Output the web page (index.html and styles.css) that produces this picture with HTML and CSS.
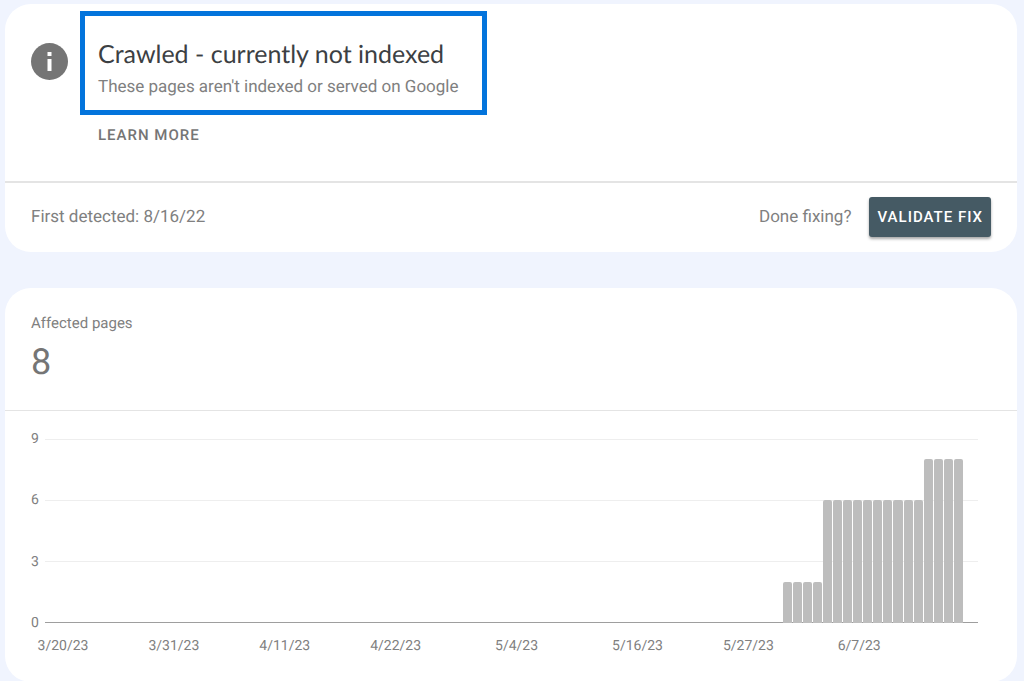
FILE: index.html
```html
<!DOCTYPE html>
<html lang="en">
<head>
	<meta charset="UTF-8" />
	<meta name="viewport" content="width=device-width, initial-scale=1.0" />
	<title>Crawled - currently not indexed</title>
	<link rel="stylesheet" href="styles.css">
</head>
<body>
	<section class="card issue">
		<div class="issue-main">
			<svg class="info" viewBox="0 0 37 37" aria-hidden="true">
				<circle cx="18.5" cy="18.5" r="18.5" fill="#757575" />
				<path d="M16.5 9h4v4h-4zM16.5 16h4v12h-4z" fill="#fff" />
			</svg>
			<div class="issue-text">
				<div class="highlight">
					<h1>Crawled - currently not indexed</h1>
					<p>These pages aren't indexed or served on Google</p>
				</div>
				<a class="learn" href="#">LEARN MORE</a>
			</div>
		</div>
		<div class="issue-foot">
			<span>First detected: 8/16/22</span>
			<div class="fix">
				<span>Done fixing?</span>
				<button type="button">VALIDATE FIX</button>
			</div>
		</div>
	</section>

	<section class="card pages">
		<div class="total">
			<h2>Affected pages</h2>
			<strong>8</strong>
		</div>
		<div class="chart">
			<div class="ticks">
				<div class="tick"><span>9</span></div>
				<div class="tick"><span>6</span></div>
				<div class="tick"><span>3</span></div>
				<div class="tick zero"><span>0</span></div>
			</div>
			<!-- one column per day, 3/20 is day 1 -->
			<div class="days bars">
				<i style="--day: 73; --value: 2"></i>
				<i style="--day: 74; --value: 2"></i>
				<i style="--day: 75; --value: 2"></i>
				<i style="--day: 76; --value: 2"></i>
				<i style="--day: 77; --value: 6"></i>
				<i style="--day: 78; --value: 6"></i>
				<i style="--day: 79; --value: 6"></i>
				<i style="--day: 80; --value: 6"></i>
				<i style="--day: 81; --value: 6"></i>
				<i style="--day: 82; --value: 6"></i>
				<i style="--day: 83; --value: 6"></i>
				<i style="--day: 84; --value: 6"></i>
				<i style="--day: 85; --value: 6"></i>
				<i style="--day: 86; --value: 6"></i>
				<i style="--day: 87; --value: 8"></i>
				<i style="--day: 88; --value: 8"></i>
				<i style="--day: 89; --value: 8"></i>
				<i style="--day: 90; --value: 8"></i>
			</div>
			<div class="days dates">
				<span style="--day: 1">3/20/23</span>
				<span style="--day: 12">3/31/23</span>
				<span style="--day: 23">4/11/23</span>
				<span style="--day: 34">4/22/23</span>
				<span style="--day: 46">5/4/23</span>
				<span style="--day: 58">5/16/23</span>
				<span style="--day: 69">5/27/23</span>
				<span style="--day: 80">6/7/23</span>
			</div>
		</div>
	</section>
</body>
</html>
```
FILE: styles.css
```css
* {
	padding: 0;
	margin: 0;
	box-sizing: border-box;
}

body {
	padding: 4px 7px 0 5px;
	font-family: Roboto, "Liberation Sans", sans-serif;
	font-size: 17px;
	line-height: 24px;
	color: #808080;
	background-color: #f0f4fe;
	text-rendering: geometricPrecision;
}

.card {
	border-radius: 26px;
	background-color: #fff;
}

/* issue card */
.issue {
	margin-bottom: 36px;
}

.issue-main {
	display: flex;
	gap: 12px;
	padding: 7px 26px 34px;
	border-bottom: 2px solid #e4e4e4;
}

.info {
	flex: none;
	width: 37px;
	height: 37px;
	margin-top: 32px;
}

.highlight {
	padding: 22px 23px 6px 13px;
	border: 5px solid #0374dc;
}

h1 {
	font-family: Lato, "Liberation Sans", sans-serif;
	font-size: 25px;
	font-weight: 400;
	line-height: 32px;
	color: #3c4043;
}

.highlight p {
	line-height: 34px;
}

.learn {
	display: inline-block;
	margin: 8px 0 0 18px;
	font-size: 15px;
	font-weight: 500;
	letter-spacing: 1px;
	color: #757575;
	text-decoration: none;
}

.issue-foot,
.fix {
	display: flex;
	align-items: center;
	justify-content: space-between;
}

.issue-foot {
	padding: 14px 26px 15px;
}

.fix {
	gap: 18px;
}

button {
	height: 40px;
	padding: 0 8px;
	border: 0;
	border-radius: 3px;
	font: 500 15px Roboto, "Liberation Sans", sans-serif;
	letter-spacing: 1px;
	color: #fff;
	background-color: #455a64;
	box-shadow: 0 2px 3px rgba(0, 0, 0, .35);
	cursor: pointer;
}

/* affected pages card */
.total {
	padding: 23px 26px 21px;
	border-bottom: 1px solid #e4e4e4;
}

h2 {
	font-size: 15px;
	font-weight: 400;
}

.total strong {
	display: block;
	font-size: 36px;
	font-weight: 400;
	line-height: 54px;
	color: #757575;
}

.chart {
	display: grid;
	grid-template-rows: 204px auto;
	padding: 18px 39px 26px 26px;
	font-size: 14px;
	line-height: 20px;
}

.ticks,
.bars {
	grid-area: 1 / 1;
}

.ticks {
	display: flex;
	flex-direction: column;
	justify-content: space-between;
}

.tick {
	display: flex;
	align-items: center;
}

.tick span {
	width: 14px;
}

.tick::after {
	content: "";
	flex: 1;
	height: 1px;
	background-color: #eee;
}

.tick.zero::after {
	background-color: #9e9e9e;
}

.days {
	display: grid;
	grid-template-columns: repeat(90, minmax(0, 1fr));
	margin: 0 14px 0 26px;
}

.bars {
	align-items: end;
	margin-top: 10px;
	margin-bottom: 10px;
}

.bars i {
	grid-area: 1 / var(--day);
	height: calc(var(--value) / 9 * 100%);
	margin-right: 1px;
	border-radius: 2px 2px 0 0;
	background-color: #bdbdbd;
}

.dates {
	margin: 3px 13px 0 27px;
}

.dates span {
	display: flex;
	justify-content: center;
	grid-area: 1 / var(--day);
	white-space: nowrap;
}
```
